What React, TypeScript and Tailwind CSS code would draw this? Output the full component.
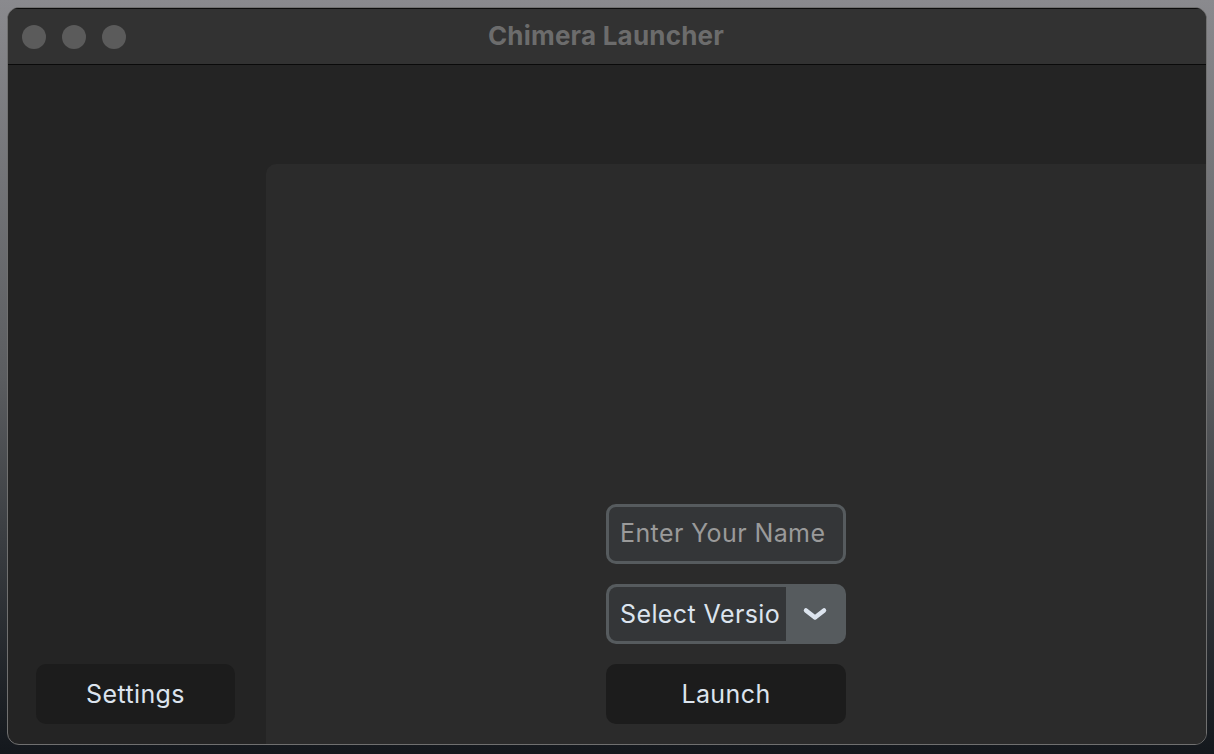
const App = () => {
    return (
        <div className="w-[1214px] h-[754px] overflow-hidden bg-gradient-to-b from-[#8a8a8e] via-[#5b5d60] to-[#14181d] pl-[7px] pt-[7px] font-['Inter','Liberation_Sans',sans-serif]">
            {/* Window */}
            <div className="w-[1200px] h-[738px] rounded-[12px] border border-[#707070] overflow-hidden flex flex-col bg-[#242424]">
                {/* Title bar */}
                <div className="h-[57px] shrink-0 bg-[#323232] border-t border-[#0c0c0c] border-b border-b-[#0a0a0a] flex items-center relative">
                    <div className="flex gap-4 pl-[14px]">
                        <span className="w-6 h-6 rounded-full bg-[#5b5b5b]" />
                        <span className="w-6 h-6 rounded-full bg-[#5b5b5b]" />
                        <span className="w-6 h-6 rounded-full bg-[#5b5b5b]" />
                    </div>
                    <div className="absolute inset-0 flex items-center justify-center pr-[2px] pb-[3px] text-[26px] font-bold text-[#6c6c6c] tracking-[0.2px]">
                        Chimera Launcher
                    </div>
                </div>

                {/* Body */}
                <div className="flex-1 flex">
                    {/* Sidebar */}
                    <div className="w-[258px] shrink-0 flex flex-col justify-end pl-[28px] pr-[31px] pb-[20px]">
                        <button className="h-[60px] w-[199px] rounded-[10px] bg-[#1c1c1c] text-[#dce4ee] text-[25px] tracking-[0.4px] pt-[1px]">
                            Settings
                        </button>
                    </div>

                    {/* Main column */}
                    <div className="flex-1 flex flex-col pt-[99px]">
                        <div className="flex-1 bg-[#2b2b2b] rounded-tl-[10px] flex flex-col justify-end pl-[340px] pb-[20px] gap-[20px]">
                            <div className="w-[240px] h-[60px] rounded-[10px] border-[3px] border-[#565b5e] bg-[#343638] flex items-center pl-[11px] text-[25px] tracking-[0.4px] text-[#9a9a9a] whitespace-nowrap">
                                Enter Your Name
                            </div>
                            <div className="w-[240px] h-[60px] rounded-[10px] bg-[#565b5e] flex overflow-hidden p-[3px] pr-0">
                                <div className="w-[177px] h-full rounded-l-[8px] bg-[#343638] flex items-center pl-[11px] pt-[1px] text-[25px] tracking-[0.4px] text-[#dce4ee] whitespace-nowrap">
                                    Select Versio
                                </div>
                                <div className="flex-1 flex items-center justify-center pr-[2px]">
                                    <svg width="28" height="18" viewBox="0 0 28 18" fill="none">
                                        <path d="M5 5.5 L14 12.5 L23 5.5" stroke="#dce4ee" strokeWidth="4.5" strokeLinecap="round" strokeLinejoin="round" />
                                    </svg>
                                </div>
                            </div>
                            <button className="w-[240px] h-[60px] rounded-[10px] bg-[#1c1c1c] text-[#dce4ee] text-[25px] tracking-[0.4px] pt-[1px]">
                                Launch
                            </button>
                        </div>
                    </div>
                </div>
            </div>
        </div>
    );
};

export default App;
